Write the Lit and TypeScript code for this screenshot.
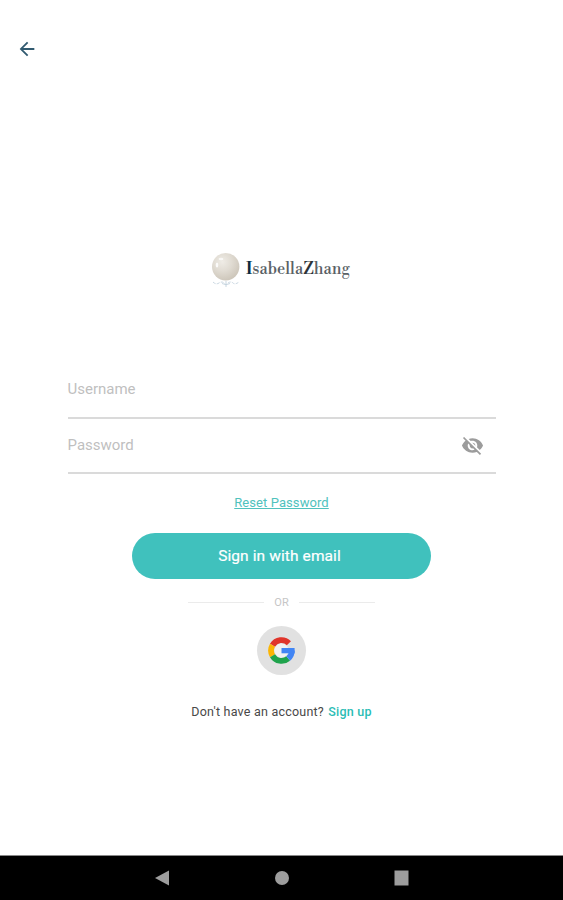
import { LitElement, html, css } from "lit";
import { customElement } from "lit/decorators.js";

@customElement("brand-logo")
class BrandLogo extends LitElement {
  static styles = css`
    :host { display: block; width: 144px; height: 42px; }
    svg { display: block; }
    .name { font-family: "Libre Bodoni", "Liberation Serif", serif; font-size: 16px; fill: #5a6166; }
    .initial { fill: #0b2c40; font-weight: bold; }
    .second { fill: #2c3338; }
  `;
  render() {
    return html`<svg width="144" height="42" viewBox="0 0 144 42">
      <defs>
        <radialGradient id="pearl" cx="38%" cy="32%" r="70%">
          <stop offset="0" stop-color="#efece6" />
          <stop offset=".5" stop-color="#e0dbd2" />
          <stop offset="1" stop-color="#cdc6ba" />
        </radialGradient>
      </defs>
      <circle cx="15.700" cy="14.700" r="13.700" fill="url(#pearl)" />
      <ellipse cx="7" cy="13" rx="1.300" ry="2.600" fill="#fff" opacity=".85" />
      <ellipse cx="11" cy="7" rx="2.400" ry="1.200" fill="#fff" opacity=".7" />
      <g fill="none" stroke="#c4d3de" stroke-width=".9">
        <path d="M3 30q3 3 6 1t5 0q2 3 4 0 3-2 5 0t6-1" stroke-dasharray="3 1.200" />
        <path d="M12 31.500q4 2.500 8 0M16 29v6" />
      </g>
      <text class="name" x="36" y="22" textLength="104" lengthAdjust="spacingAndGlyphs"><tspan class="initial">I</tspan>sabella<tspan class="second">Z</tspan>hang</text>
    </svg>`;
  }
}

@customElement("app-root")
class AppRoot extends LitElement {
  static styles = css`
    :host {
      display: flex; flex-direction: column; box-sizing: border-box;
      width: 563px; height: 900px; overflow: hidden;
      background: #fff; font-family: Roboto, sans-serif;
    }
    svg { display: block; }
    .top { height: 60px; padding: 38px 0 0 16px; box-sizing: border-box; }
    .content { flex: 1; display: flex; flex-direction: column; align-items: center; }
    .logo { margin-top: 192px; }
    .form { width: 428px; margin-top: 66px; }
    .field {
      box-sizing: border-box; height: 55px; display: flex; align-items: center;
      justify-content: space-between; padding: 0 12px 1px 0;
      border-bottom: 2px solid #dadada; color: #bfbfbf; font-size: 15px;
    }
    .field.user { height: 59px; padding-bottom: 0; }
    .reset {
      margin-top: 20px; height: 18px; line-height: 18px; font-size: 13px;
      letter-spacing: 0.08px; color: #50c2bd; text-decoration: underline;
    }
    .signin {
      margin-top: 21px; width: 299px; height: 46px; border: 0; padding: 0 4px 0 0;
      border-radius: 23px; background: #40c1bd; color: #fff;
      font: 400 15.5px/46px Roboto, sans-serif; letter-spacing: 0.1px;
      -webkit-text-stroke: 0.2px #fff;
    }
    .or {
      display: flex; align-items: center; justify-content: space-between;
      width: 188px; height: 16px; margin-top: 15px; color: #c6c6c6; font-size: 11px;
    }
    .rule { width: 76px; height: 1px; background: #ebebeb; }
    .google {
      margin-top: 16px; width: 49px; height: 49px; border-radius: 50%;
      background: #e1e1e1; display: flex; align-items: center; justify-content: center;
    }
    .account {
      margin-top: 28px; height: 18px; line-height: 18px; font-size: 12.5px;
      color: #484848; letter-spacing: 0.22px; white-space: nowrap;
    }
    .signup { color: #2bbdb5; font-weight: 500; margin-left: 1px; }
    .nav {
      box-sizing: border-box; height: 45px; background: #000;
      border-top: 1px solid #888; display: flex; justify-content: center; align-items: center;
      gap: 105px;
    }
  `;
  render() {
    return html`
      <div class="top">
        <svg width="22" height="22" viewBox="0 0 24 24" fill="#315a70"><path d="M20 11H7.830l5.590-5.590L12 4l-8 8 8 8 1.410-1.410L7.830 13H20z" /></svg>
      </div>
      <div class="content">
        <brand-logo class="logo"></brand-logo>
        <div class="form">
          <div class="field user"><span>Username</span></div>
          <div class="field">
            <span>Password</span>
            <svg width="23" height="23" viewBox="0 0 24 24" fill="#9c9c9c"><path d="M12 7c2.760 0 5 2.240 5 5 0 .65-.13 1.260-.36 1.830l2.920 2.920c1.510-1.260 2.700-2.890 3.430-4.750-1.730-4.390-6-7.500-11-7.500-1.400 0-2.740.25-3.980.7l2.160 2.160C10.740 7.130 11.350 7 12 7zM2 4.270l2.280 2.280.46.46C3.080 8.300 1.780 10.020 1 12c1.730 4.390 6 7.500 11 7.500 1.550 0 3.030-.3 4.380-.84l.42.42L19.730 22 21 20.730 3.270 3 2 4.270zM7.530 9.800l1.550 1.550c-.05.21-.08.43-.08.65 0 1.660 1.340 3 3 3 .22 0 .44-.03.65-.08l1.550 1.550c-.67.33-1.410.53-2.200.53-2.760 0-5-2.240-5-5 0-.79.2-1.530.53-2.200zm4.310-.78l3.150 3.150.02-.16c0-1.660-1.340-3-3-3l-.17.01z" /></svg>
          </div>
        </div>
        <div class="reset">Reset Password</div>
        <button class="signin">Sign in with email</button>
        <div class="or"><span class="rule"></span><span>OR</span><span class="rule"></span></div>
        <div class="google">
          <svg width="27" height="27" viewBox="-13.500 -13.500 27 27">
            <circle r="7" fill="#f1f1f1" />
            <g fill="none" stroke-width="5.800">
              <path stroke="#e0352b" d="M-9 -5.200A10.400 10.400 0 0 1 7.400 -7.300" />
              <path stroke="#fbb505" d="M-9 5.200A10.400 10.400 0 0 1 -9 -5.200" />
              <path stroke="#1fa34c" d="M6.700 7.950A10.400 10.400 0 0 1 -9 5.200" />
              <path stroke="#4285f4" d="M10.400 0A10.400 10.400 0 0 1 6.700 7.950" />
            </g>
            <path fill="#4285f4" d="M0-2.500h13.100V2.800H0z" />
          </svg>
        </div>
        <div class="account">Don't have an account? <span class="signup">Sign up</span></div>
      </div>
      <div class="nav">
        <svg width="15" height="16" viewBox="0 0 15 16" fill="#9d9d9d"><path d="M0 8L14 0.500v15z" /></svg>
        <svg width="14" height="14" viewBox="0 0 14 14" fill="#9d9d9d"><circle cx="7" cy="7" r="7" /></svg>
        <svg width="15" height="16" viewBox="0 0 15 16" fill="#9d9d9d"><path d="M.5.5h14v15H.5z" /></svg>
      </div>
    `;
  }
}
